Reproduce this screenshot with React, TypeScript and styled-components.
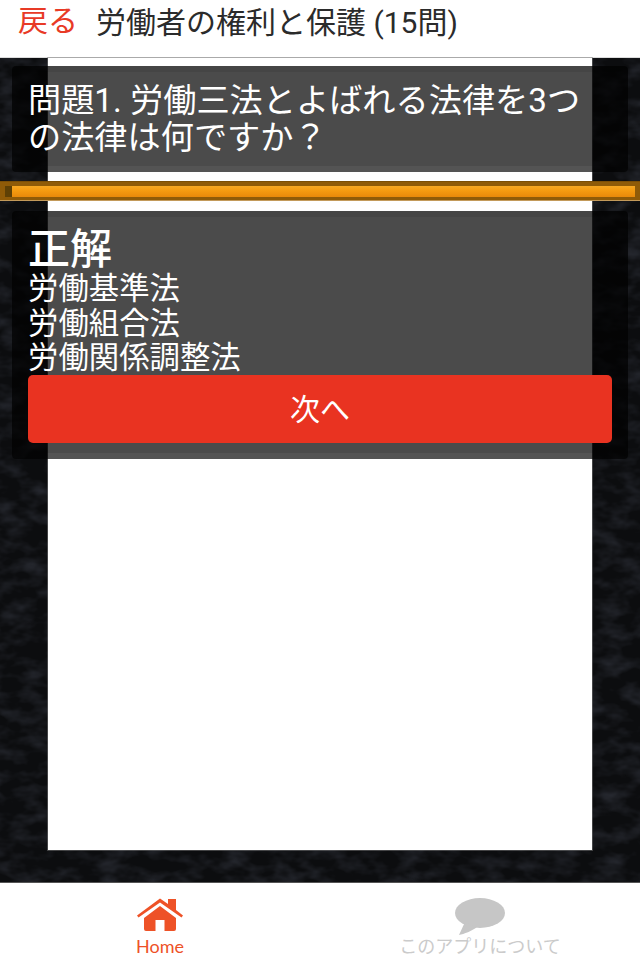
import styled, { createGlobalStyle } from "styled-components";

const GlobalStyle = createGlobalStyle`
  html, body {
    margin: 0;
    padding: 0;
    background: #fff;
  }

  body {
    font-family: "Roboto", "Noto Sans CJK JP", sans-serif;
  }
`;

const Screen = styled.div`
  display: flex;
  flex-direction: column;
  width: 640px;
  height: 960px;
  overflow: hidden;
`;

const Header = styled.header`
  display: flex;
  align-items: flex-start;
  height: 57px;
  flex: none;
  background: #fff;
  border-bottom: 1px solid #dcdcdc;
`;

const BackLink = styled.a`
  margin: 2px 0 0 18px;
  font-size: 30px;
  line-height: 38px;
  color: #e83a26;
`;

const Title = styled.h1`
  margin: 3px 0 0 18px;
  font-size: 30px;
  font-weight: 400;
  line-height: 40px;
  color: #2b2b2b;
  white-space: nowrap;
`;

const Stage = styled.main`
  position: relative;
  display: grid;
  flex: none;
  height: 825px;
  background: #0c0d0f;
  border-bottom: 1px solid #555;
  box-sizing: border-box;
`;

const Texture = styled.svg`
  position: absolute;
  inset: 0;
  width: 100%;
  height: 100%;
`;

const Sheet = styled.div`
  position: relative;
  grid-area: 1 / 1;
  margin: 0 48px 32px;
  background: #fff;
  box-shadow: 0 0 0 1px rgba(120, 120, 120, 0.5);
`;

const Content = styled.div`
  position: relative;
  grid-area: 1 / 1;
  display: flex;
  flex-direction: column;
  align-items: stretch;
  padding-top: 8px;
`;

const Panel = styled.section`
  margin: 0 12px;
  padding: 16px;
  background: linear-gradient(
    rgba(0, 0, 0, 0.73) 0,
    rgba(0, 0, 0, 0.73) 6px,
    rgba(0, 0, 0, 0.705) 6px,
    rgba(0, 0, 0, 0.705) calc(100% - 6px),
    rgba(0, 0, 0, 0.67) calc(100% - 6px)
  );
  border-radius: 4px;
  color: #fff;
`;

const Question = styled(Panel)`
  height: 74px;
  font-size: 33.2px;
  line-height: 37px;
  white-space: nowrap;
`;

const Answer = styled(Panel)`
  display: flex;
  flex-direction: column;
  height: 216px;
`;

const AnswerTitle = styled.h2`
  margin: 0;
  font-size: 42px;
  font-weight: 500;
  line-height: 45px;
`;

const AnswerLine = styled.div`
  font-size: 30.4px;
  line-height: 34.5px;
`;

const NextButton = styled.button`
  flex: none;
  height: 68px;
  margin-top: -0.5px;
  padding: 0 0 4px;
  border: 0;
  border-radius: 5px;
  background: #e93321;
  color: #fff;
  font-family: inherit;
  font-size: 30px;
`;

const ProgressBar = styled.div`
  height: 11px;
  margin: 9px 0 10px;
  padding: 4px 5px 3px;
  background: #8f5b08;
  border-top: 1px solid #7b4e05;
  border-bottom: 1px solid #c39a5a;
`;

const ProgressFill = styled.div`
  display: flex;
  height: 11px;
  background: linear-gradient(#f7a823 0, #f49a10 45%, #e8890a 100%);
`;

const ProgressStart = styled.div`
  width: 7px;
  background: #5e4005;
`;

const TabBar = styled.nav`
  display: grid;
  flex: 1;
  grid-template-columns: 1fr 1fr;
  background: #fff;
`;

const Tab = styled.a<{ $active?: boolean }>`
  display: flex;
  flex-direction: column;
  align-items: center;
  padding-top: 15px;
  font-family: "Lato", "Noto Sans CJK JP", sans-serif;
  font-size: 18px;
  line-height: 22px;
  color: ${(p) => (p.$active ? "#ee5227" : "#cbcbcb")};
`;

const HomeIcon = styled.svg`
  display: block;
  width: 46px;
  height: 33px;
  margin-bottom: 4px;
`;

const ChatIcon = styled.svg`
  display: block;
  width: 50px;
  height: 37px;
`;

const answers = ["労働基準法", "労働組合法", "労働関係調整法"];

export default function App() {
  return (
    <Screen>
      <GlobalStyle />
      <Header>
        <BackLink>戻る</BackLink>
        <Title>労働者の権利と保護 (15問)</Title>
      </Header>
      <Stage>
        <Texture aria-hidden="true">
          <filter id="rock" x="0" y="0" width="100%" height="100%" colorInterpolationFilters="sRGB">
            <feTurbulence type="fractalNoise" baseFrequency="0.04 0.07" numOctaves={3} seed={7} />
            <feColorMatrix
              type="matrix"
              values="0 0 0 0 0.16  0 0 0 0 0.17  0 0 0 0 0.2  1.8 0 0 0 -0.72"
            />
          </filter>
          <rect width="100%" height="100%" filter="url(#rock)" />
        </Texture>
        <Sheet />
        <Content>
          <Question>
            問題1. 労働三法とよばれる法律を3つ
            <br />
            の法律は何ですか？
          </Question>
          <ProgressBar>
            <ProgressFill>
              <ProgressStart />
            </ProgressFill>
          </ProgressBar>
          <Answer>
            <AnswerTitle>正解</AnswerTitle>
            {answers.map((a) => (
              <AnswerLine key={a}>{a}</AnswerLine>
            ))}
            <NextButton>次へ</NextButton>
          </Answer>
        </Content>
      </Stage>
      <TabBar>
        <Tab $active>
          <HomeIcon viewBox="0 0 46 33">
            <path
              fill="#ee5227"
              d="M0 17.500 23 .5l8 5.500V1h8v11l7 5.500-1.500 2L23 4.500 1.500 19.500z"
            />
            <path
              fill="#ee5227"
              d="M7 20 23 8l16 12v11a2 2 0 0 1-2 2H27.500V22h-9v11H9a2 2 0 0 1-2-2z"
            />
          </HomeIcon>
          Home
        </Tab>
        <Tab>
          <ChatIcon viewBox="0 0 50 37">
            <ellipse cx="25" cy="15" rx="25" ry="15" fill="#c6c6c6" />
            <path fill="#c6c6c6" d="M10 24 4 37c5-1 13-4 18-8z" />
          </ChatIcon>
          このアプリについて
        </Tab>
      </TabBar>
    </Screen>
  );
}
